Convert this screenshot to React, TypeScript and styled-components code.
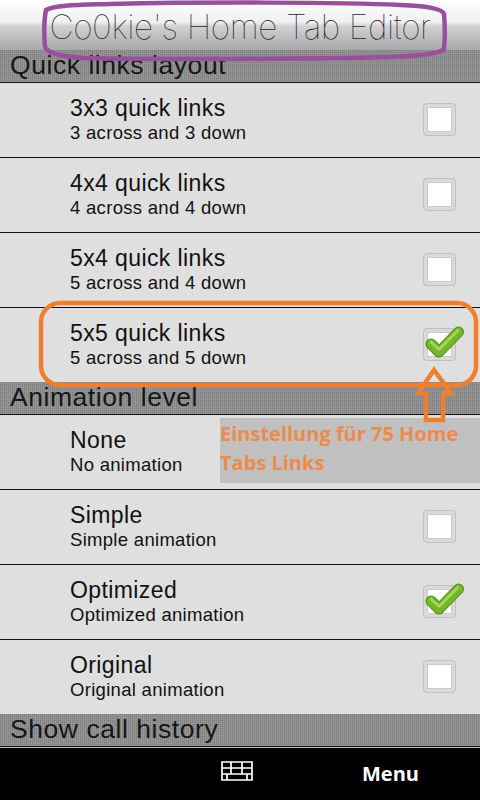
import React from "react";
import styled, { createGlobalStyle } from "styled-components";

const Global = createGlobalStyle`
  html, body { margin: 0; padding: 0; background: #000; }
  #root { width: 480px; height: 800px; }
`;

const Screen = styled.div`
  position: relative;
  width: 480px;
  height: 800px;
  overflow: hidden;
  display: flex;
  flex-direction: column;
  background: #dfdfdf;
  font-family: "Liberation Sans", Arial, sans-serif;
  color: #111;
`;

const Header = styled.header`
  height: 50px;
  flex: none;
  display: flex;
  align-items: center;
  justify-content: center;
  background: linear-gradient(#ffffff 0, #f0eff1 22px, #d2d1d3 26px, #c3c3c5 34px, #a9a8aa 50px);
`;

const Title = styled.h1`
  margin: 3px 0 0 0;
  font-family: Inter, "Liberation Sans", sans-serif;
  font-weight: 100;
  font-size: 33.4px;
  letter-spacing: -0.4px;
  color: #1f1f21;
  white-space: nowrap;
`;

const Section = styled.div`
  height: 33px;
  flex: none;
  box-sizing: border-box;
  padding: 0 0 1px 10px;
  display: flex;
  align-items: center;
  font-size: 26.5px;
  letter-spacing: 0.55px;
  line-height: 1;
  color: #161616;
  background-color: #8f8f8f;
  background-image:
    repeating-linear-gradient(90deg, rgba(0,0,0,0.1) 0 1px, transparent 1px 2px),
    repeating-linear-gradient(0deg, rgba(255,255,255,0.1) 0 1px, transparent 1px 2px);
  border-bottom: 1px solid #111;
`;

const Row = styled.div<{ $last?: boolean }>`
  height: ${(p) => (p.$last ? 74 : 75)}px;
  flex: none;
  box-sizing: border-box;
  display: flex;
  align-items: center;
  padding: 0 24px 0 70px;
  background: #dfdfdf;
  border-bottom: ${(p) => (p.$last ? "none" : "1px solid #111")};
`;

const RowText = styled.div`
  flex: 1;
  display: flex;
  flex-direction: column;
  gap: 2px;
  margin-top: -1px;
`;

const RowTitle = styled.div`
  font-size: 23px;
  line-height: 25px;
  letter-spacing: 0.4px;
  color: #111;
`;

const RowSub = styled.div`
  font-size: 18.5px;
  line-height: 20px;
  letter-spacing: 0.3px;
  color: #111;
`;

const Box = styled.div`
  position: relative;
  box-sizing: border-box;
  width: 33px;
  height: 33px;
  border-radius: 4px;
  background: #fff;
  border: 4px solid #dadada;
  outline: 1px solid #c0c0c0;
  outline-offset: -1px;
  box-shadow: inset 0 0 0 1px #c9c9c9;
  margin-top: -1px;
`;

const Check = styled.svg`
  position: absolute;
  left: -3px;
  top: -6px;
  width: 40px;
  height: 32px;
`;

const Footer = styled.footer`
  flex: 1;
  position: relative;
  display: grid;
  grid-template-columns: 221px 32px 1fr;
  align-items: start;
  background: #000;
  border-top: 1px solid #bbb;
  color: #fff;
`;

const KeyIcon = styled.svg`
  grid-column: 2;
  width: 32px;
  height: 20px;
  margin-top: 13px;
  display: block;
`;

const MenuLabel = styled.div`
  grid-column: 3;
  justify-self: start;
  margin: 13px 0 0 109px;
  font-family: "Open Sans", "DejaVu Sans", sans-serif;
  font-weight: 700;
  font-size: 20px;
  line-height: 26px;
`;

const Overlay = styled.svg`
  position: absolute;
  left: 0;
  top: 0;
  width: 480px;
  height: 800px;
  pointer-events: none;
`;

const Note = styled.div`
  position: absolute;
  left: 220px;
  top: 418px;
  width: 260px;
  height: 65px;
  box-sizing: border-box;
  padding: 1px 0 0 0;
  background: #c0c0c0;
  color: #ee8a4c;
  font-family: "Open Sans", "Noto Sans", sans-serif;
  font-weight: 700;
  font-size: 20px;
  line-height: 29px;
`;

const groups = [
  {
    title: "Quick links layout",
    rows: [
      ["3x3 quick links", "3 across and 3 down", false],
      ["4x4 quick links", "4 across and 4 down", false],
      ["5x4 quick links", "5 across and 4 down", false],
      ["5x5 quick links", "5 across and 5 down", true],
    ],
  },
  {
    title: "Animation level",
    rows: [
      ["None", "No animation", false],
      ["Simple", "Simple animation", false],
      ["Optimized", "Optimized animation", true],
      ["Original", "Original animation", false],
    ],
  },
] as const;

const CheckMark = () => (
  <Check viewBox="0 0 40 32">
    <g fill="none" strokeLinecap="round" strokeLinejoin="round">
      <polyline points="7,18 15,26 34.5,6" stroke="#4f8a1a" strokeWidth="11" />
      <polyline points="7,18 15,26 34.5,6" stroke="#76b52c" strokeWidth="9" />
      <polyline points="7,16 15,23.5 34,4.4" stroke="#a5d85a" strokeWidth="2.6" />
    </g>
  </Check>
);

export default function App() {
  return (
    <>
      <Global />
      <Screen>
        <Header>
          <Title>Co0kie's Home Tab Editor</Title>
        </Header>
        {groups.map((g) => (
          <React.Fragment key={g.title}>
            <Section>{g.title}</Section>
            {g.rows.map(([t, s, c], i) => (
              <Row key={t} $last={i === 3}>
                <RowText>
                  <RowTitle>{t}</RowTitle>
                  <RowSub>{s}</RowSub>
                </RowText>
                <Box>{c && <CheckMark />}</Box>
              </Row>
            ))}
          </React.Fragment>
        ))}
        <Section>Show call history</Section>
        <Footer>
          <KeyIcon viewBox="0 0 32 20">
            <path
              d="M1 1h30v18H1z M1 7h30 M1 13h30 M10 1v12 M21 1v12 M6 13v6 M26 13v6"
              fill="none"
              stroke="#fff"
              strokeWidth="1.7"
            />
          </KeyIcon>
          <MenuLabel>Menu</MenuLabel>
        </Footer>
        <Note>
          Einstellung für 75 Home
          <br />
          Tabs Links
        </Note>
        <Overlay viewBox="0 0 480 800">
          <path
            d="M46 10 C55 5 80 5 110 4 C200 2 340 2 400 5 C425 6 442 8 444 14 C445 25 445 38 444 49 C440 54 420 56 390 57 C300 59 160 60 85 58 C65 57 48 54 45 47 C44 35 44 20 46 10 Z"
            fill="none"
            stroke="#9a4f9e"
            strokeWidth="4.5"
          />
          <rect x="41" y="303" width="435" height="82" rx="19" fill="none" stroke="#ee7f2e" strokeWidth="4.5" />
          <path
            d="M434 370 L451 393 H443 V420 H426 V393 H418 Z"
            fill="none"
            stroke="#ee7f2e"
            strokeWidth="4.5"
          />
        </Overlay>
      </Screen>
    </>
  );
}
